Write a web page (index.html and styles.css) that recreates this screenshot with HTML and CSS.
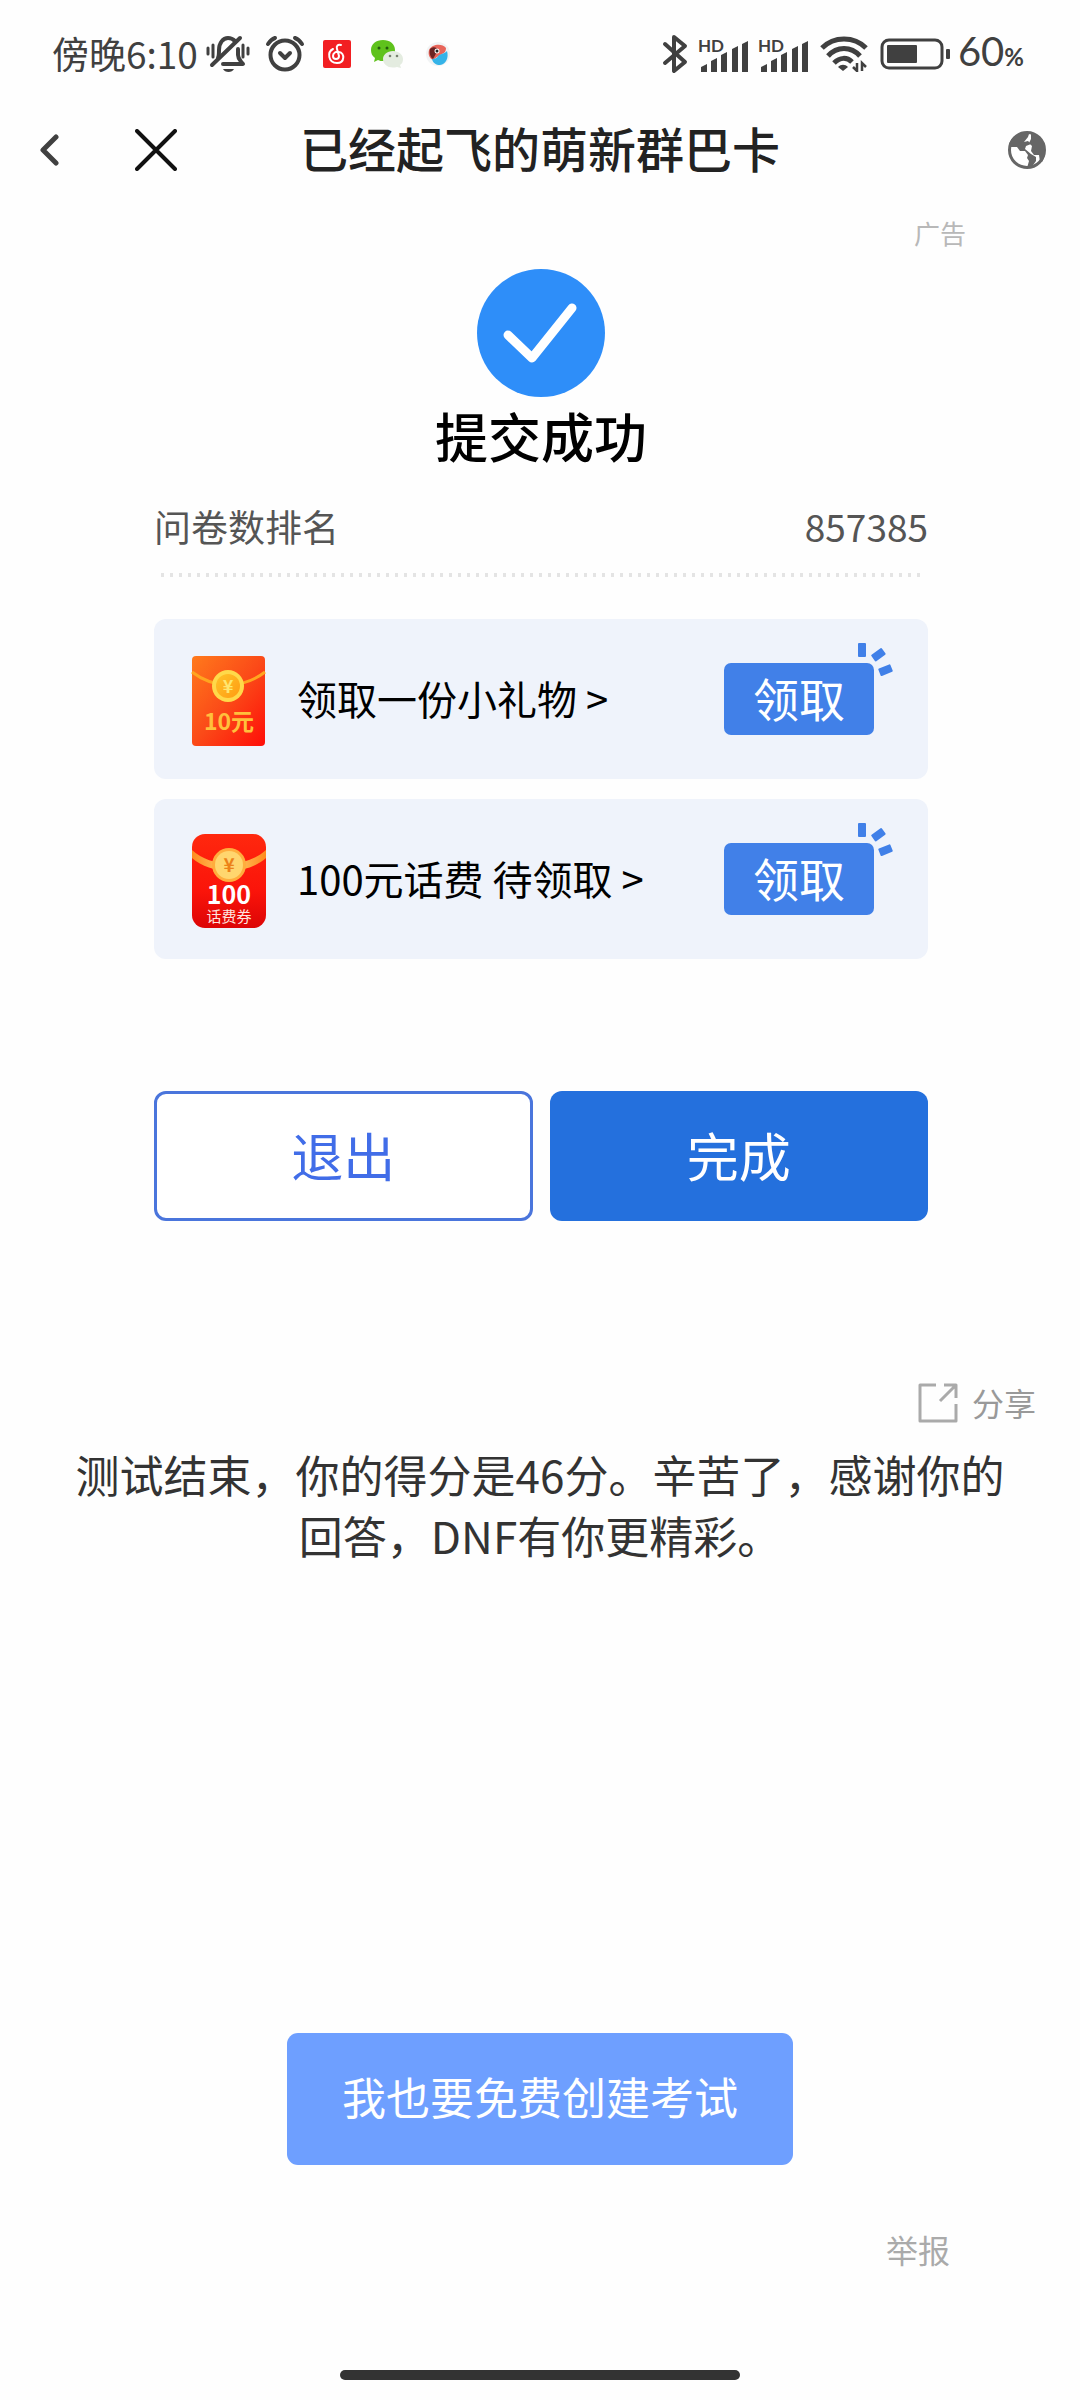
FILE: index.html
```html
<!DOCTYPE html>
<html lang="zh-CN">
<head>
<meta charset="utf-8">
<meta name="viewport" content="width=device-width, initial-scale=1">
<title>已经起飞的萌新群巴卡</title>
<link rel="stylesheet" href="styles.css">
</head>
<body>
<div class="status-bar">
  <div class="status-left">
    <span class="clock">傍晚6:10</span>
    <svg class="icon-mute" width="44" height="38" viewBox="0 0 44 38" fill="none" stroke="#404040" stroke-width="4" stroke-linecap="round" stroke-linejoin="round">
      <path d="M2 13v6M7 10v12M37 10v12M42 13v6" stroke-width="3"/>
      <path d="M12 23c1-2 1-4 1-8 0-7 4-12 9-12 3 0 5 1 7 3"/>
      <path d="M6 30 34 3"/>
      <path d="M32 14v6c0 4 2 5 5 9H17"/>
      <path d="M17 34h11c-1 2-3 3-5.500 3s-4.500-1-5.500-3z" fill="#404040" stroke="none"/>
    </svg>
    <svg class="icon-alarm" width="40" height="38" viewBox="0 0 40 38" fill="none" stroke="#404040" stroke-width="4" stroke-linecap="round" stroke-linejoin="round">
      <circle cx="20" cy="20" r="14.500"/>
      <path d="M3 9c2-3 4-5 7-6M37 9c-2-3-4-5-7-6M15 18l5 5 5-5"/>
    </svg>
    <svg class="icon-music" width="28" height="28" viewBox="0 0 28 28">
      <rect width="28" height="28" rx="2" fill="#f21f22"/>
      <path d="M18 5c-3-1-5 1-4 4l2 7c0 4-6 4-6 0 0-3 3-5 6-4 6 1 6 11-2 11-9 0-10-11-4-14" fill="none" stroke="#fff" stroke-width="2" stroke-linecap="round"/>
    </svg>
    <svg class="icon-chat" width="32" height="28" viewBox="0 0 32 28">
      <path d="M12 0c7 0 12 4 12 10s-5 11-12 11c-2 0-3 0-5-1l-4 2 1-4c-3-2-4-5-4-8C0 4 5 0 12 0z" fill="#5fc21c"/>
      <circle cx="8" cy="8" r="1.500" fill="#245c0c"/><circle cx="16" cy="8" r="1.500" fill="#245c0c"/>
      <path d="M22 11c6 0 10 4 10 8 0 3-1 5-3 6l1 3-4-1c-8 2-14-2-14-8 0-4 4-8 10-8z" fill="#e4ece0"/>
      <circle cx="19" cy="16" r="1.300" fill="#77806f"/><circle cx="26" cy="16" r="1.300" fill="#77806f"/>
    </svg>
    <svg class="icon-bird" width="26" height="26" viewBox="0 0 26 26">
      <circle cx="13" cy="13" r="12" fill="#f1f3f4"/>
      <path d="M4 9c3-6 13-7 17-2 0 3-1 5-4 6l-5 3-4 3c-4-2-5-6-4-10z" fill="#e8655a"/>
      <path d="M5 8c3-3 7-2 8 1l-5 9c-3-2-4-6-3-10z" fill="#6b2222"/>
      <path d="M22 10c2 7-1 13-7 14-4 0-7-2-8-6 3 0 5-1 7-4 2-1 5-1 8-4z" fill="#35b3e8"/>
      <circle cx="12" cy="10" r="2.500" fill="#fff"/><circle cx="12" cy="10" r="1.500" fill="#222"/>
    </svg>
  </div>
  <div class="status-right">
    <svg class="icon-bluetooth" width="26" height="40" viewBox="0 0 26 40" fill="none" stroke="#404040" stroke-width="4" stroke-linejoin="round" stroke-linecap="round">
      <path d="M3 10l20 18-11 9V3l11 9L3 29"/>
    </svg>
    <svg class="icon-signal" width="52" height="44" viewBox="0 -7 52 44" fill="#404040">
      <text x="0" y="13" font-size="17" font-weight="700">HD</text>
      <path d="M3 28l6-3v8H3zM13 22l6-3v14h-6zM23 16l6-3v20h-6zM34 10l6-3v26h-6zM44 5l6-3v31h-6z"/>
    </svg>
    <svg class="icon-signal" width="52" height="44" viewBox="0 -7 52 44" fill="#404040">
      <text x="0" y="13" font-size="17" font-weight="700">HD</text>
      <path d="M3 28l6-3v8H3zM13 22l6-3v14h-6zM23 16l6-3v20h-6zM34 10l6-3v26h-6zM44 5l6-3v31h-6z"/>
    </svg>
    <svg class="icon-wifi" width="48" height="36" viewBox="0 0 48 36" fill="none" stroke="#404040" stroke-width="5">
      <path d="M2 12c12-12 32-12 44 0M8 20c9-10 23-10 32 0M14 27c6-6 13-6 18-1"/>
      <path d="M18 31c3-3 7-3 10 0l-5 4z" fill="#404040" stroke="none"/>
      <path d="M37 27v8l-4-4M42 35v-8l4 4" stroke-width="2.500"/>
    </svg>
    <svg class="icon-battery" width="70" height="32" viewBox="0 0 70 32">
      <rect x="2" y="2" width="60" height="28" rx="7" fill="none" stroke="#404040" stroke-width="3"/>
      <rect x="7" y="7" width="30" height="18" rx="1" fill="#404040"/>
      <rect x="66" y="11" width="4" height="10" rx="1" fill="#404040"/>
    </svg>
    <span class="battery-level">60<small>%</small></span>
  </div>
</div>

<header class="nav-bar">
  <div class="nav-side">
    <button class="nav-button" type="button" aria-label="返回">
      <svg width="20" height="34" viewBox="0 0 20 34" fill="none" stroke="#404040" stroke-width="5" stroke-linecap="round" stroke-linejoin="round"><path d="M17 4 4 17l13 13"/></svg>
    </button>
    <button class="nav-button" type="button" aria-label="关闭">
      <svg width="42" height="42" viewBox="0 0 42 42" fill="none" stroke="#111" stroke-width="4" stroke-linecap="round"><path d="M2 2l38 38M40 2 2 40"/></svg>
    </button>
  </div>
  <h1 class="nav-title">已经起飞的萌新群巴卡</h1>
  <div class="nav-side nav-side-end">
    <button class="nav-button" type="button" aria-label="浏览器">
      <svg width="40" height="40" viewBox="0 0 40 40">
        <circle cx="20" cy="20" r="17.500" fill="#fff" stroke="#666" stroke-width="3"/>
        <path d="M20 2C9 3 2 9 2 17l8 0 3 4 5 0 3 4-1 3 2 3-2 7h4l5-7 0-4-5-3-6-5 1-3 5-2-3-3-4 1 4-5 1-3z" fill="#666"/>
        <path d="M24 2l0 7-2 4 3 3-1 5 3 4 5 0 1 7 2 0c6-10 2-26-11-30z" fill="#666"/>
      </svg>
    </button>
  </div>
</header>

<main class="page">
  <p class="ad-label">广告</p>
  <section class="result">
    <svg class="success-icon" width="128" height="128" viewBox="0 0 128 128">
      <circle cx="64" cy="64" r="64" fill="#2e8ef9"/>
      <path d="M31 66l24 23 40-50" fill="none" stroke="#fff" stroke-width="9" stroke-linecap="round" stroke-linejoin="round"/>
    </svg>
    <h2 class="result-title">提交成功</h2>
    <div class="rank"><span>问卷数排名</span><span>857385</span></div>
    <div class="divider"></div>
    <div class="offers">
      <div class="offer">
        <svg class="offer-icon" width="76" height="96" viewBox="0 0 76 96">
          <defs>
            <linearGradient id="packet" x1="0" y1="0" x2="1" y2="1"><stop offset="0" stop-color="#ff7a1c"/><stop offset=".5" stop-color="#fb4a18"/><stop offset="1" stop-color="#ff0d08"/></linearGradient>
            <linearGradient id="coin" x1="0" y1="0" x2="1" y2="1"><stop offset="0" stop-color="#ffc42a"/><stop offset="1" stop-color="#ff9b12"/></linearGradient>
          </defs>
          <rect x="1" y="5" width="73" height="90" rx="4" fill="url(#packet)"/>
          <path d="M1 21c22 17 51 17 73 0" fill="none" stroke="#ffa51f" stroke-width="3"/>
          <circle cx="37" cy="35" r="16" fill="#ffd94a"/><circle cx="37" cy="35" r="12" fill="url(#coin)"/>
          <text x="37" y="42" font-size="18" font-weight="700" fill="#ffe670" text-anchor="middle">¥</text>
          <text x="38" y="79" font-size="23" font-weight="700" fill="#ffc03c" text-anchor="middle">10元</text>
        </svg>
        <a class="offer-text" href="#">领取一份小礼物 &gt;</a>
        <button class="claim" type="button">领取
          <svg class="sparks" width="36" height="34" viewBox="0 0 36 34" fill="#4180e8"><rect x="0" y="0" width="8" height="14" rx="1"/><rect x="14" y="8" width="13" height="8" rx="1" transform="rotate(-36 20 12)"/><rect x="21" y="23" width="13" height="8" rx="1" transform="rotate(-22 28 27)"/></svg>
        </button>
      </div>
      <div class="offer">
        <svg class="offer-icon" width="76" height="100" viewBox="0 0 76 100">
          <defs>
            <linearGradient id="voucher" x1="0" y1="0" x2="0" y2="1"><stop offset="0" stop-color="#ff280e"/><stop offset=".6" stop-color="#fb140a"/><stop offset="1" stop-color="#dc0506"/></linearGradient>
            <linearGradient id="ribbon"><stop offset="0" stop-color="#ff8b1f"/><stop offset=".5" stop-color="#ffd06a"/><stop offset="1" stop-color="#ff8b1f"/></linearGradient>
          </defs>
          <rect x="1" y="5" width="74" height="94" rx="13" fill="url(#voucher)"/>
          <path d="M1 21c20 18 54 18 74 0v8C56 46 20 46 1 29z" fill="url(#ribbon)"/>
          <circle cx="38" cy="36" r="17" fill="#ffad3d"/><circle cx="38" cy="36" r="14" fill="#ffd66e"/>
          <text x="38" y="43" font-size="19" font-weight="700" fill="#ec8218" text-anchor="middle">¥</text>
          <text class="voucher-value" x="38" y="75" font-size="25" font-weight="700" fill="#fff" text-anchor="middle">100</text>
          <text x="38" y="93" font-size="15" fill="#ffe3df" text-anchor="middle">话费券</text>
        </svg>
        <a class="offer-text" href="#">100元话费 待领取 &gt;</a>
        <button class="claim" type="button">领取
          <svg class="sparks" width="36" height="34" viewBox="0 0 36 34" fill="#4180e8"><rect x="0" y="0" width="8" height="14" rx="1"/><rect x="14" y="8" width="13" height="8" rx="1" transform="rotate(-36 20 12)"/><rect x="21" y="23" width="13" height="8" rx="1" transform="rotate(-22 28 27)"/></svg>
        </button>
      </div>
    </div>
    <div class="actions">
      <button class="action action-exit" type="button">退出</button>
      <button class="action action-done" type="button">完成</button>
    </div>
  </section>

  <a class="share" href="#">
    <svg width="40" height="40" viewBox="0 0 40 40" fill="none" stroke="#aaa" stroke-width="3" stroke-linejoin="round"><path d="M18 2H2v36h36V21M26 2h12v13M38 2 22 18"/></svg>
    <span>分享</span>
  </a>
  <p class="score">测试结束，你的得分是46分。辛苦了，感谢你的回答，DNF有你更精彩。</p>
  <button class="create" type="button">我也要免费创建考试</button>
  <a class="report" href="#">举报</a>
</main>
<div class="home-indicator"></div>
</body>
</html>
```

FILE: styles.css
```css
* {
  box-sizing: border-box;
}

body {
  margin: 0;
  min-height: 100vh;
  display: flex;
  flex-direction: column;
  background: #fefefe;
  color: #333;
  font-family: "Noto Sans CJK SC", sans-serif;
}

h1, h2, p {
  margin: 0;
}

button {
  border: 0;
  padding: 0;
  background: none;
  color: inherit;
  font: inherit;
}

a {
  color: inherit;
  text-decoration: none;
}

svg {
  display: block;
  flex: none;
}

/* System status bar */
.status-bar {
  display: flex;
  justify-content: space-between;
  align-items: center;
  height: 108px;
  padding: 0 56px 0 52px;
  color: #404040;
}

.status-left,
.status-right {
  display: flex;
  align-items: center;
}

.clock {
  padding-bottom: 2px;
  font-size: 37px;
  line-height: 48px;
}

.icon-mute {
  margin-left: 8px;
}

.icon-alarm {
  margin-left: 15px;
}

.icon-music {
  margin-left: 18px;
}

.icon-chat {
  margin-left: 20px;
}

.icon-bird {
  margin-left: 22px;
}

.icon-signal {
  margin-left: 8px;
  font-family: Lato, sans-serif;
}

.icon-bluetooth + .icon-signal {
  margin-left: 10px;
}

.icon-wifi {
  margin-left: 10px;
}

.icon-battery {
  margin-left: 12px;
}

.battery-level {
  margin-left: 8px;
  font-family: Lato, sans-serif;
  font-size: 40px;
  line-height: 48px;
}

.battery-level small {
  font-size: 24px;
  font-weight: 700;
}

/* Title bar */
.nav-bar {
  display: grid;
  grid-template-columns: 1fr auto 1fr;
  align-items: center;
  height: 84px;
  padding: 0 33px 0 39px;
}

.nav-side {
  display: flex;
  align-items: center;
  gap: 76px;
}

.nav-side-end {
  justify-content: flex-end;
}

.nav-title {
  padding: 0 6px 6px 0;
  color: #222;
  font-size: 48px;
  font-weight: 500;
  line-height: 64px;
}

/* Page body */
.page {
  display: flex;
  flex-direction: column;
}

.ad-label {
  margin-top: 21px;
  padding-right: 114px;
  color: #b8b8b8;
  font-size: 26px;
  line-height: 40px;
  text-align: right;
}

.result {
  display: flex;
  flex-direction: column;
  padding: 0 152px 0 154px;
}

.success-icon {
  align-self: center;
  margin-top: 16px;
}

.result-title {
  margin-top: 2px;
  color: #000;
  font-size: 53px;
  font-weight: 500;
  line-height: 72px;
  text-align: center;
}

.rank {
  display: flex;
  justify-content: space-between;
  align-items: flex-start;
  margin-top: 28px;
  color: #555;
  font-size: 37px;
  line-height: 54px;
}

.divider {
  height: 4px;
  margin: 20px 4px 0;
  background: radial-gradient(circle, #e4e4e4 2px, transparent 2px) 0 0 / 9px 4px;
}

.offers {
  display: grid;
  gap: 20px;
  margin-top: 42px;
}

.offer {
  display: flex;
  align-items: center;
  height: 160px;
  padding: 0 54px 0 37px;
  border-radius: 12px;
  background: #eff3fb;
}

.offer-text {
  flex: 1;
  margin-left: 30px;
  padding-bottom: 2px;
  color: #000;
  font-size: 40px;
  line-height: 56px;
}

.claim {
  position: relative;
  width: 150px;
  height: 72px;
  padding-bottom: 4px;
  border-radius: 7px;
  background: #4180e8;
  color: #fff;
  font-size: 46px;
  line-height: 68px;
}

.sparks {
  position: absolute;
  top: -20px;
  right: -20px;
}

.actions {
  display: grid;
  grid-template-columns: 1fr 1fr;
  gap: 17px;
  margin-top: 132px;
}

.action {
  height: 130px;
  padding-bottom: 4px;
  border-radius: 12px;
  font-size: 52px;
}

.action-exit {
  border: 3px solid #4a75dc;
  background: #fff;
  color: #416de8;
}

.action-done {
  background: #2470dd;
  color: #fff;
}

.share {
  display: flex;
  align-items: center;
  align-self: flex-end;
  gap: 14px;
  margin: 161px 44px 0 0;
  color: #999;
  font-size: 32px;
  line-height: 40px;
}

.share span {
  padding-bottom: 2px;
}

.score {
  margin-top: 20px;
  padding: 0 64px;
  font-size: 44px;
  line-height: 61px;
  text-align: center;
}

.create {
  align-self: center;
  height: 132px;
  margin-top: 467px;
  padding: 0 55px 6px;
  border-radius: 11px;
  background: #6e9fff;
  color: #fff;
  font-size: 44px;
}

.report {
  align-self: flex-end;
  margin: 64px 130px 40px 0;
  color: #aaa;
  font-size: 32px;
  line-height: 40px;
}

.home-indicator {
  width: 37%;
  height: 10px;
  margin: auto auto 20px;
  border-radius: 5px;
  background: #333;
}
```
